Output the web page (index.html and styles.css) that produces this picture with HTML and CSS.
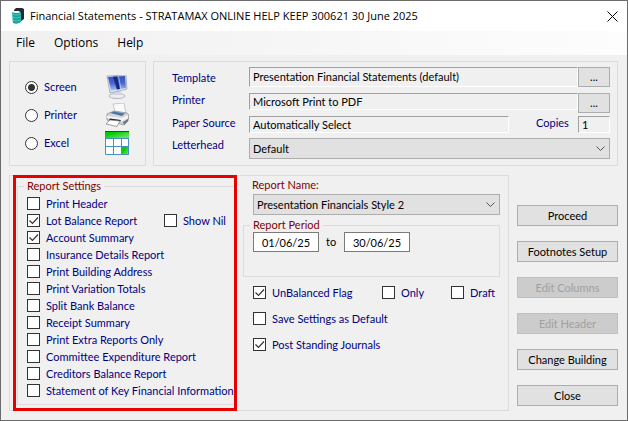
FILE: index.html
```html
<!DOCTYPE html>
<html lang="en">
<head>
  <meta charset="UTF-8" />
  <title>Financial Statements</title>
  <link rel="stylesheet" href="styles.css">
</head>
<body>
  <div class="window">
    <header class="title-bar">
      <svg class="app-icon" width="14" height="18" viewBox="0 0 14 18">
        <path d="M3 3 L5 1 H11 L13 2 V12 L10 14 V6 L8 4 H3 Z" fill="#26292d"/>
        <path d="M1 5 Q5 7 10 5 V15 Q6 18 2 16 Z" fill="#12a89d"/>
        <path d="M1 7 Q5 9 10 7 M1 10 Q5 12 10 10 M1 13 Q5 15 10 13" fill="none" stroke="#5fd0c8" stroke-width="0.700"/>
      </svg>
      <h1>Financial Statements - STRATAMAX ONLINE HELP KEEP 300621 30 June 2025</h1>
      <button class="close-btn" aria-label="Close window">
        <svg width="11" height="11" viewBox="0 0 11 11"><path d="M0.500 0.500 L10.500 10.500 M10.500 0.500 L0.500 10.500" stroke="#000" fill="none"/></svg>
      </button>
    </header>

    <nav class="menu-bar">
      <button>File</button>
      <button>Options</button>
      <button>Help</button>
    </nav>

    <main class="content">
      <div class="top-row">
        <section class="panel output">
          <div class="output-row">
            <label><input type="radio" name="output" checked>Screen</label>
            <svg width="24" height="24" viewBox="0 0 24 24">
              <defs>
                <linearGradient id="scr" x1="0" y1="0" x2="0" y2="1">
                  <stop offset="0" stop-color="#3450b8"/>
                  <stop offset="0.500" stop-color="#4a68cc"/>
                  <stop offset="1" stop-color="#a9bdf0"/>
                </linearGradient>
              </defs>
              <ellipse cx="12" cy="21" rx="8" ry="2.500" fill="#eceef1" stroke="#b4b7be"/>
              <path d="M9 15 L16 15 L16 20 L9 20 Z" fill="#d4d7dd"/>
              <path d="M2 1 L21 0 L22 14 L5 18 Z" fill="#dfe3ee" stroke="#9aa3bd" stroke-width="0.800"/>
              <path d="M3 2 L20 1 L21 13 L6 15.500 Z" fill="url(#scr)"/>
              <path d="M8 1.700 L12 1.500 L15 14 L12 14.500 Z" fill="#142a86"/>
              <path d="M13 1.500 L14 1.400 L16.500 13.700 L15.500 14 Z" fill="#dbe6ff" opacity="0.600"/>
            </svg>
          </div>
          <div class="output-row">
            <label><input type="radio" name="output">Printer</label>
            <svg width="24" height="24" viewBox="0 0 24 24">
              <path d="M8 1 L19 0 L21 10 L11 12 Z" fill="#fafafa" stroke="#b5b5b5" stroke-width="0.700"/>
              <path d="M2 11 L9 8 L22 10 L24 12 L23 18 L19 22 L2 17 Z" fill="#d3d7db" stroke="#8a9096" stroke-width="0.800"/>
              <path d="M5 10 L9 8.500 L20 10.500 L17 13 Z" fill="#4a77a3"/>
              <path d="M2 13 L17 15 L23 12 L23 15 L17 18 L2 15 Z" fill="#f5f6f7"/>
              <path d="M5 15.500 L16 17 L15 18.500 L4 17 Z" fill="#1c1f22"/>
              <path d="M5 17 L15 18 L12 23.500 L1 21 Z" fill="#fff" stroke="#777" stroke-width="0.700"/>
              <path d="M18 19 L23 16 V18 L19 22 Z" fill="#6f757b"/>
            </svg>
          </div>
          <div class="output-row">
            <label><input type="radio" name="output">Excel</label>
            <svg width="24" height="24" viewBox="0 0 24 24">
              <defs>
                <linearGradient id="grn" x1="0" y1="0" x2="1" y2="1">
                  <stop offset="0.300" stop-color="#00cf00"/>
                  <stop offset="1" stop-color="#7fe47f"/>
                </linearGradient>
              </defs>
              <rect width="24" height="24" fill="#fff"/>
              <rect width="24" height="7" fill="url(#grn)"/>
              <rect x="17" y="16" width="7" height="8" fill="url(#grn)"/>
              <path d="M0.500 7 V23.500 H23.500 V7 M8.500 7 V24 M16.500 7 V24 M0 7.500 H24 M0 15.500 H24" fill="none" stroke="#4a8fc0"/>
              <path d="M0 0.500 H24" stroke="#1238c0"/>
            </svg>
          </div>
        </section>

        <section class="panel printing">
          <label for="template" class="template-label">Template</label>
          <input id="template" class="field wide" type="text" value="Presentation Financial Statements (default)" readonly>
          <button class="browse" aria-label="Choose template">...</button>

          <label for="printer">Printer</label>
          <input id="printer" class="field wide" type="text" value="Microsoft Print to PDF" readonly>
          <button class="browse" aria-label="Choose printer">...</button>

          <label for="paper">Paper Source</label>
          <input id="paper" class="field" type="text" value="Automatically Select" readonly>
          <label for="copies" class="copies-label">Copies</label>
          <input id="copies" class="field" type="text" value="1">

          <label for="letterhead">Letterhead</label>
          <select id="letterhead" class="letterhead">
            <option>Default</option>
          </select>
        </section>
      </div>

      <div class="bottom-row">
        <section class="panel report">
          <div class="highlight">
            <fieldset class="settings">
              <legend>Report Settings</legend>
              <label><input type="checkbox">Print Header</label>
              <div class="split">
                <label><input type="checkbox" checked>Lot Balance Report</label>
                <label><input type="checkbox">Show Nil</label>
              </div>
              <label><input type="checkbox" checked>Account Summary</label>
              <label><input type="checkbox">Insurance Details Report</label>
              <label><input type="checkbox">Print Building Address</label>
              <label><input type="checkbox">Print Variation Totals</label>
              <label><input type="checkbox">Split Bank Balance</label>
              <label><input type="checkbox">Receipt Summary</label>
              <label><input type="checkbox">Print Extra Reports Only</label>
              <label><input type="checkbox">Committee Expenditure Report</label>
              <label><input type="checkbox">Creditors Balance Report</label>
              <label><input type="checkbox">Statement of Key Financial Information</label>
            </fieldset>
          </div>

          <div class="details">
            <label for="reportName" class="heading">Report Name:</label>
            <select id="reportName" class="report-name">
              <option>Presentation Financials Style 2</option>
            </select>

            <fieldset class="period">
              <legend>Report Period</legend>
              <input type="text" value="01/06/25" aria-label="Period start">
              <span>to</span>
              <input type="text" value="30/06/25" aria-label="Period end">
            </fieldset>

            <div class="flags">
              <label><input type="checkbox" checked>UnBalanced Flag</label>
              <label><input type="checkbox">Only</label>
              <label><input type="checkbox">Draft</label>
              <label class="full"><input type="checkbox">Save Settings as Default</label>
              <label class="full"><input type="checkbox" checked>Post Standing Journals</label>
            </div>
          </div>
        </section>

        <div class="actions">
          <button>Proceed</button>
          <button>Footnotes Setup</button>
          <button disabled>Edit Columns</button>
          <button disabled>Edit Header</button>
          <button>Change Building</button>
          <button>Close</button>
        </div>
      </div>
    </main>
  </div>
</body>
</html>
```

FILE: styles.css
```css
* {
  box-sizing: border-box;
}
body {
  margin: 0;
  font-family: Lato, Arial, sans-serif;
  font-size: 11px;
  line-height: 14px;
  color: #000;
}
button, input, select {
  font: inherit;
  color: inherit;
  margin: 0;
  border-radius: 0;
}
label {
  color: #000080;
}
.window {
  display: flex;
  flex-direction: column;
  min-height: 100vh;
  background: #f0f0f0;
  border: 1px solid #6b6b6b;
}

/* title and menu */
.title-bar {
  display: flex;
  align-items: center;
  height: 30px;
  padding: 0 9px 0 10px;
  background: #fff;
}
.title-bar h1 {
  flex: 1;
  margin: 0 0 0 5px;
  font-family: "Open Sans", sans-serif;
  font-size: 11px;
  font-weight: normal;
  white-space: nowrap;
}
.close-btn {
  display: flex;
  padding: 0;
  border: none;
  background: none;
}
.menu-bar {
  display: flex;
  gap: 19px;
  height: 24px;
  padding: 0 15px;
  background: linear-gradient(to right, #f0f0f0, #fdfdfd);
  font-family: "Open Sans", sans-serif;
  font-size: 12px;
}
.menu-bar button {
  padding: 0;
  border: none;
  background: none;
}

/* panels */
.content {
  flex: 1;
  padding: 6px 9px 8px 8px;
}
.panel {
  border: 1px solid #dcdcdc;
}
.top-row {
  display: flex;
  gap: 7px;
  margin-bottom: 9px;
}
.output {
  display: flex;
  flex-direction: column;
  gap: 4px;
  width: 137px;
  height: 105px;
  padding: 13px 16px 0 15px;
}
.output-row {
  display: flex;
  align-items: center;
  justify-content: space-between;
}
.output-row label {
  display: flex;
  align-items: center;
  gap: 6px;
}
input[type="radio"] {
  appearance: none;
  width: 13px;
  height: 13px;
  border: 1px solid #333;
  border-radius: 50%;
  background: #fff;
}
input[type="radio"]:checked {
  background: radial-gradient(circle, #333 3px, #fff 4px);
}
.printing {
  flex: 1;
  display: grid;
  grid-template-columns: 77px 1fr 69px 32px;
  grid-template-rows: 26px 23px 22px 21px;
  align-items: start;
  padding: 5px 7px 0 18px;
}
.printing label {
  white-space: nowrap;
}
.printing .template-label {
  padding-top: 4px;
}
.printing .copies-label {
  padding-left: 27px;
}
.field {
  width: 100%;
  height: 17px;
  padding: 0 3px;
  border: 1px solid;
  border-color: #a0a0a0 #fff #fff #a0a0a0;
  background: #f0f0f0;
}
.wide {
  grid-column: span 2;
}
#template {
  height: 20px;
  padding-bottom: 2px;
}
.browse {
  height: 20px;
  padding: 0;
  border: 1px solid #adadad;
  background: #e1e1e1;
}
select {
  appearance: none;
  height: 21px;
  padding: 0 20px 0 3px;
  border: 1px solid #adadad;
  background: #e1e1e1 url("data:image/svg+xml,%3Csvg xmlns='http://www.w3.org/2000/svg' width='9' height='6'%3E%3Cpath d='M0.500 0.500 L4.500 4.500 L8.500 0.500' fill='none' stroke='%23555'/%3E%3C/svg%3E") no-repeat right 4px center;
}
.letterhead {
  grid-column: span 3;
}

/* report panel */
.bottom-row {
  display: flex;
  gap: 8px;
}
.report {
  flex: 1;
  display: flex;
  gap: 6px;
  padding: 0 8px 0 3px;
}
.highlight {
  width: 224px;
  margin: -1px 0;
  padding: 1px 0 3px 1px;
  border: 3px solid #e80000;
}
fieldset {
  margin: 0;
  min-width: 0;
  border: 1px solid #dcdcdc;
}
legend {
  padding: 0 3px;
  color: #800000;
}
.heading {
  color: #800000;
}
.settings {
  display: flex;
  flex-direction: column;
  gap: 4px;
  padding: 4px 0 7px 9px;
  border-right: none;
}
.settings legend {
  margin-left: -3px;
}
.settings label,
.flags label {
  display: flex;
  align-items: center;
  gap: 6px;
  height: 13px;
  white-space: nowrap;
}
.split {
  display: flex;
}
.split label:first-child {
  width: 137px;
}
input[type="checkbox"] {
  appearance: none;
  flex: none;
  width: 13px;
  height: 13px;
  border: 1px solid #333;
  background: #fff;
}
input[type="checkbox"]:checked {
  background: #fff url("data:image/svg+xml,%3Csvg xmlns='http://www.w3.org/2000/svg' width='11' height='11'%3E%3Cpath d='M1.500 5.500 L4.500 8.500 L10 2.500' fill='none' stroke='%23333' stroke-width='1.200'/%3E%3C/svg%3E") no-repeat center;
}
.details {
  flex: 1;
  display: flex;
  flex-direction: column;
}
.details .heading {
  margin: 2px 0 2px 9px;
}
.report-name {
  margin-left: 10px;
}
.period {
  display: flex;
  align-items: center;
  gap: 7px;
  height: 59px;
  margin-top: 3px;
  padding: 0 9px 20px;
}
.period legend {
  margin-left: -3px;
}
.period span {
  width: 11px;
}
.period input {
  width: 66px;
  height: 20px;
  padding: 0;
  border: 1px solid #7a7a7a;
  background: #fff;
  text-align: center;
}
.flags {
  display: grid;
  grid-template-columns: 129px 69px 1fr;
  row-gap: 13px;
  margin: 9px 0 0 10px;
}
.flags .full {
  grid-column: 1 / -1;
}

/* buttons */
.actions {
  display: flex;
  flex-direction: column;
  gap: 15px;
  width: 101px;
  padding-top: 30px;
}
.actions button {
  height: 21px;
  padding: 0;
  border: 1px solid #adadad;
  background: #e1e1e1;
}
.actions button:disabled {
  border-color: #bfbfbf;
  background: #ccc;
  color: #a0a0a0;
}
```
